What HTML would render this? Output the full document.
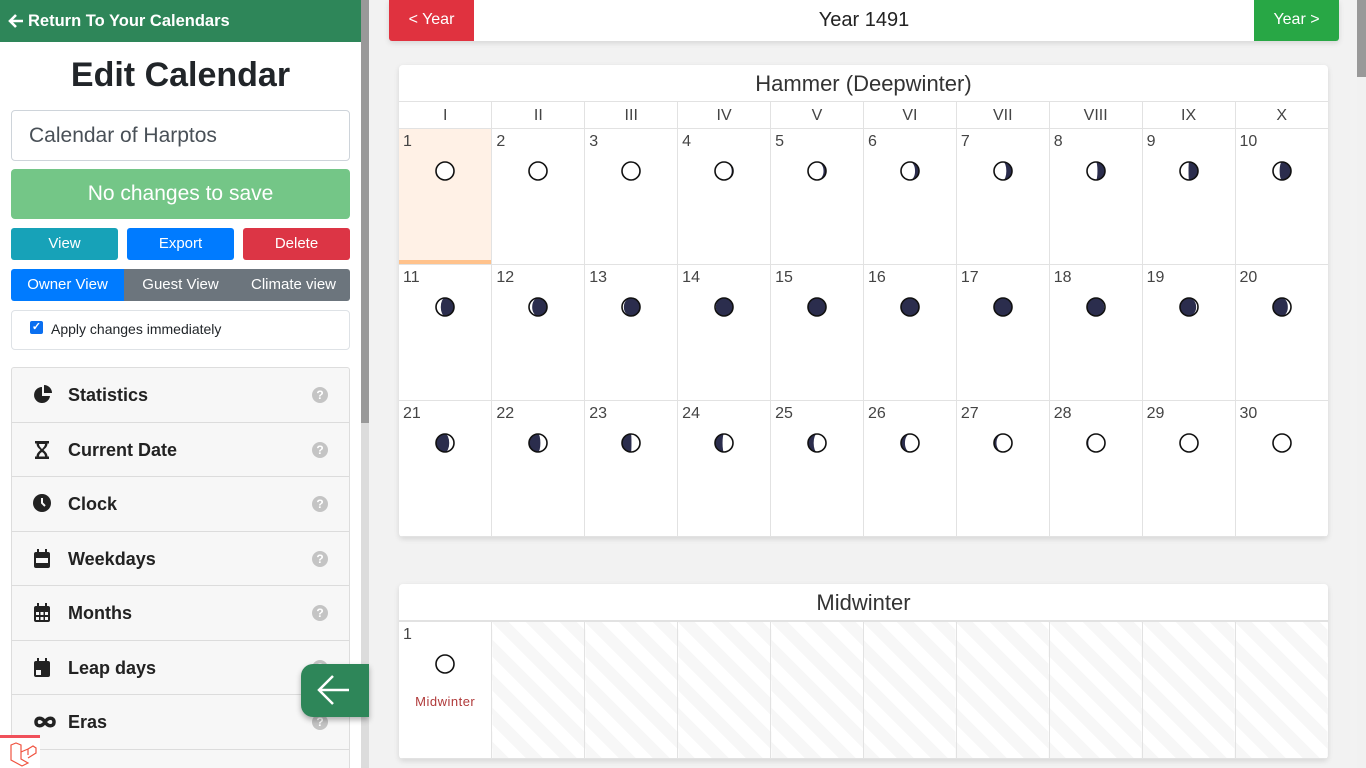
<!DOCTYPE html>
<html><head><meta charset="utf-8">
<style>
*{box-sizing:border-box;margin:0;padding:0}
body{width:1366px;height:768px;overflow:hidden;background:#f2f2f2;font-family:"Liberation Sans",sans-serif;position:relative;color:#212529}
#side{position:absolute;left:0;top:0;width:361px;height:768px;background:#fff;overflow:hidden}
#sb1{position:absolute;left:361px;top:0;width:8px;height:768px;background:#dcdcdc}
#sb1 i{position:absolute;left:0;top:0;width:8px;height:423px;background:#999}
#sb2{position:absolute;left:1357px;top:0;width:9px;height:768px;background:#f1f1f1}
#sb2 i{position:absolute;left:0;top:0;width:9px;height:77px;background:#999}
.hdr{height:42px;background:#2e8659;color:#fff;font-weight:bold;font-size:16.5px;line-height:42px;padding-left:28px;position:relative}
.hdr svg{position:absolute;left:8px;top:13px}
h1{text-align:center;font-size:34px;font-weight:bold;margin-top:15px;height:36px;line-height:36px;color:#212529}
.inp{position:absolute;left:11px;top:110px;width:339px;height:51px;border:1px solid #ced4da;border-radius:4px;font-size:21px;color:#495057;line-height:49px;padding-left:17px}
.save{position:absolute;left:11px;top:169px;width:339px;height:50px;background:#74c687;border-radius:4px;color:#fff;font-size:21px;text-align:center;line-height:50px}
.b{position:absolute;top:228px;height:32px;width:107px;border-radius:3px;color:#fff;font-size:15px;text-align:center;line-height:31px}
.grp{position:absolute;top:269px;height:32px;width:113px;color:#fff;font-size:15px;text-align:center;line-height:31px;background:#6c757d}
.chk{position:absolute;left:11px;top:310px;width:339px;height:40px;border:1px solid #dee2e6;border-radius:4px;font-size:14px;line-height:36px;padding-left:39px}
.chk b{position:absolute;left:18px;top:10px;width:13px;height:13px;background:#0a6ff0;border-radius:2px;color:#fff;font-size:11px;line-height:13px;text-align:center}
.acc{position:absolute;left:11px;top:367px;width:339px;border:1px solid #ddd;border-radius:3px;background:#f7f7f7}
.row{height:54.5px;border-bottom:1px solid #dcdcdc;position:relative;font-weight:bold;font-size:18px;line-height:54px;padding-left:56px;color:#222}
.row svg.ic{position:absolute;left:21px;top:17px}
.q{position:absolute;left:300px;top:19px;width:16px;height:16px;border-radius:50%;background:#c4c4c4;color:#fff;font-size:12px;line-height:16px;text-align:center;font-weight:bold}
#float{position:absolute;left:301px;top:664px;width:68px;height:53px;background:#2e8659;border-radius:12px 0 0 12px;box-shadow:0 3px 6px rgba(0,0,0,.3)}
#lara{position:absolute;left:0;top:735px;width:40px;height:33px;background:#fff;border-top:3px solid #f0505a}
#top{position:absolute;left:389px;top:0;width:950px;height:41px;background:#fff;box-shadow:0 2px 6px rgba(0,0,0,.12);border-radius:0 0 3px 3px;text-align:center;font-size:20px;line-height:40px;color:#222}
#top .l,#top .r{position:absolute;top:0;height:41px;width:85px;color:#fff;font-size:16px;line-height:40px}
.card{position:absolute;left:399px;width:929px;background:#fff;border-radius:4px;box-shadow:0 2px 6px rgba(0,0,0,.12);overflow:hidden}
.title{height:37px;text-align:center;font-size:22px;line-height:37px;color:#333;border-bottom:1px solid #e2e2e2}
table{border-collapse:collapse;width:929px;table-layout:fixed}
td,th{border:1px solid #e2e2e2;vertical-align:top}
tr td:first-child,tr th:first-child{border-left:none}
tr td:last-child,tr th:last-child{border-right:none}
th{font-weight:normal;font-size:16px;color:#444;height:26px;line-height:16px;padding-top:6px;border-top:none}
td{height:136px;position:relative;font-size:16px;color:#444;padding:4px 0 0 4px}
td svg{position:absolute;left:50%;margin-left:-10px;top:32px}
.hl{background:#fff1e6;box-shadow:inset 0 -4px 0 #ffc28c}
.st{background:repeating-linear-gradient(45deg,#f7f7f7 0 12px,#fff 12px 24px)}
</style></head><body>
<div id="side">
<div class="hdr"><svg width="16" height="16" viewBox="0 0 16 16"><path d="M15 8H3M8 2L2 8L8 14" stroke="#fff" stroke-width="2.6" fill="none"/></svg>Return To Your Calendars</div>
<h1>Edit Calendar</h1>
<div class="inp">Calendar of Harptos</div>
<div class="save">No changes to save</div>
<div class="b" style="left:11px;background:#17a2b8">View</div>
<div class="b" style="left:127px;background:#007bff">Export</div>
<div class="b" style="left:243px;background:#dc3545">Delete</div>
<div class="grp" style="left:11px;background:#007bff;border-radius:3px 0 0 3px">Owner View</div>
<div class="grp" style="left:124px">Guest View</div>
<div class="grp" style="left:237px;border-radius:0 3px 3px 0">Climate view</div>
<div class="chk"><b>✓</b>Apply changes immediately</div>
<div class="acc">
<div class="row"><svg class="ic" width="20" height="20" viewBox="0 0 20 20"><path d="M9 2A8 8 0 1 0 17 11H9Z" fill="#222"/><path d="M11 0A8 8 0 0 1 19 8H11Z" fill="#222"/></svg>Statistics<span class="q">?</span></div>
<div class="row"><svg class="ic" width="20" height="20" viewBox="0 0 20 20"><path d="M2 1H16V3.5H14.5C14.5 7 11.5 9 10.5 10C11.5 11 14.5 13 14.5 16.5H16V19H2V16.5H3.5C3.5 13 6.5 11 7.5 10C6.5 9 3.5 7 3.5 3.5H2Z" fill="#222"/><path d="M6 4H12C12 6 10 8 9 9C8 8 6 6 6 4ZM6 16.5C6 14 8 12.5 9 12C10 12.5 12 14 12 16.5Z" fill="#f7f7f7"/></svg>Current Date<span class="q">?</span></div>
<div class="row"><svg class="ic" width="20" height="20" viewBox="0 0 20 20"><circle cx="9" cy="9" r="9" fill="#222"/><path d="M9 4V9L12 12" stroke="#f7f7f7" stroke-width="2" fill="none"/></svg>Clock<span class="q">?</span></div>
<div class="row"><svg class="ic" width="20" height="20" viewBox="0 0 20 20"><rect x="1" y="3" width="16" height="16" rx="2" fill="#222"/><rect x="4" y="0" width="2" height="4" fill="#222"/><rect x="12" y="0" width="2" height="4" fill="#222"/><rect x="3" y="9" width="12" height="5" fill="#f7f7f7"/></svg>Weekdays<span class="q">?</span></div>
<div class="row"><svg class="ic" width="20" height="20" viewBox="0 0 20 20"><rect x="1" y="3" width="16" height="16" rx="2" fill="#222"/><rect x="4" y="0" width="2" height="4" fill="#222"/><rect x="12" y="0" width="2" height="4" fill="#222"/><g fill="#f7f7f7"><rect x="3" y="9" width="3" height="3"/><rect x="7.5" y="9" width="3" height="3"/><rect x="12" y="9" width="3" height="3"/><rect x="3" y="14" width="3" height="3"/><rect x="7.5" y="14" width="3" height="3"/><rect x="12" y="14" width="3" height="3"/></g></svg>Months<span class="q">?</span></div>
<div class="row"><svg class="ic" width="20" height="20" viewBox="0 0 20 20"><rect x="1" y="3" width="16" height="16" rx="2" fill="#222"/><rect x="4" y="0" width="2" height="4" fill="#222"/><rect x="12" y="0" width="2" height="4" fill="#222"/><rect x="3" y="12" width="5" height="5" fill="#f7f7f7"/></svg>Leap days<span class="q">?</span></div>
<div class="row"><svg class="ic" width="24" height="20" viewBox="0 0 24 20"><path d="M12 10C9 5 3 5 3 10S9 15 12 10S21 5 21 10S15 15 12 10Z" stroke="#222" stroke-width="3.5" fill="none"/></svg>Eras<span class="q">?</span></div>
<div class="row">&nbsp;<span class="q">?</span></div>
</div>
<div id="lara"><svg width="30" height="26" viewBox="0 0 30 26" style="margin:3px 0 0 8px"><path d="M3 4L8 2L13 4V18L20 22L14 25L3 19ZM13 11L20 8V14M20 8L25 5L28 7V12L20 17" stroke="#f05340" stroke-width="1.2" fill="none"/></svg></div>
</div>
<div id="sb1"><i></i></div>
<div id="float"><svg width="68" height="53" viewBox="0 0 68 53"><path d="M48 26H18M32 12L18 26L32 40" stroke="#fff" stroke-width="2.5" fill="none"/></svg></div>
<div id="top"><div class="l" style="left:0;background:#e0323f;border-radius:0 0 0 3px">&lt; Year</div>Year 1491<div class="r" style="right:0;background:#28a745;border-radius:0 0 3px 0">Year &gt;</div></div>
<div class="card" style="top:65px"><div class="title">Hammer (Deepwinter)</div><table id="t1"></table></div>
<div class="card" style="top:584px"><div class="title">Midwinter</div><table id="t2"></table></div>
<div id="sb2"><i></i></div>
<script>
function moon(d){var r=9,th=(d<=2||d>=29)?0:2*Math.PI*(d-1.5)/29;var k=Math.abs(Math.cos(th))*r,s='<svg width="20" height="20" viewBox="-10 -10 20 20"><circle r="'+r+'" fill="#fff"/>';
var wan=th<=Math.PI,big=Math.cos(th)<0;
if(th>0.05&&th<2*Math.PI-0.05){
if(wan) s+='<path d="M0,-9A9 9 0 0 1 0,9A'+k+' 9 0 0 '+(big?1:0)+' 0,-9Z" fill="#2b2d4d"/>';
else s+='<path d="M0,-9A9 9 0 0 0 0,9A'+k+' 9 0 0 '+(big?0:1)+' 0,-9Z" fill="#2b2d4d"/>';}
return s+'<circle r="'+r+'" fill="none" stroke="#111" stroke-width="1.6"/></svg>';}
var R=['I','II','III','IV','V','VI','VII','VIII','IX','X'],h='<tr>';
R.forEach(function(x){h+='<th>'+x+'</th>'});h+='</tr>';
for(var w=0;w<3;w++){h+='<tr>';for(var c=0;c<10;c++){var d=w*10+c+1;h+='<td'+(d==1?' class="hl"':'')+'>'+d+moon(d)+'</td>'}h+='</tr>'}
document.getElementById('t1').innerHTML=h;
h='<tr><td>1'+moon(1)+'<div style="position:absolute;left:0;right:0;top:72px;text-align:center;color:#b03a3a;font-size:13px;letter-spacing:.5px">Midwinter</div></td>';
for(var c=1;c<10;c++)h+='<td class="st"></td>';
document.getElementById('t2').innerHTML=h+'</tr>';
document.querySelectorAll('#t2 td').forEach(function(e){e.style.height='137px'});
</script>
</body></html>
